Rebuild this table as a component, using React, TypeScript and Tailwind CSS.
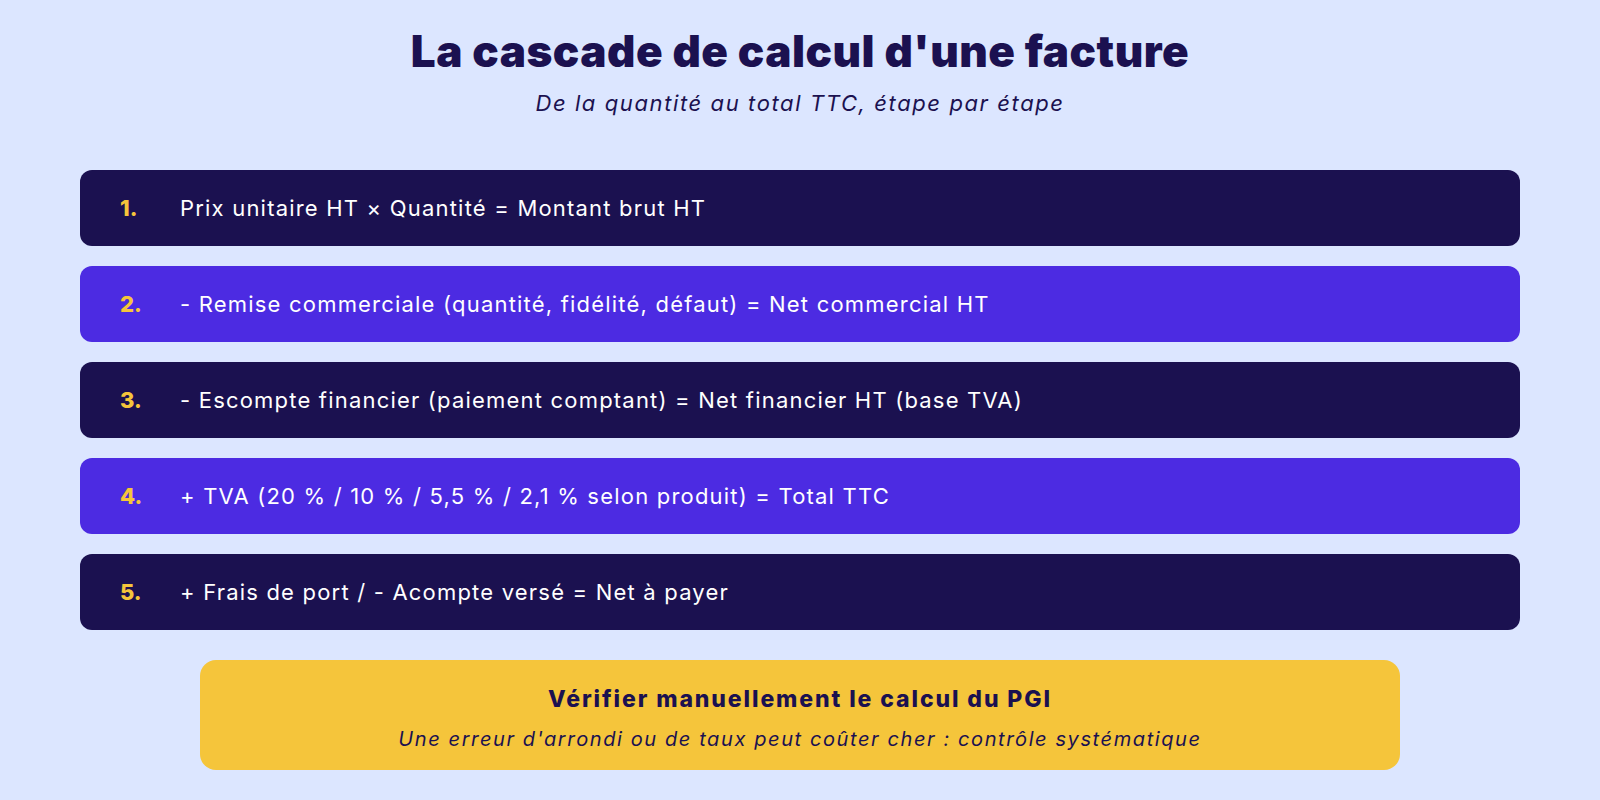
const steps = [
  { n: '1.', text: 'Prix unitaire HT × Quantité = Montant brut HT', dark: true },
  { n: '2.', text: '- Remise commerciale (quantité, fidélité, défaut) = Net commercial HT', dark: false },
  { n: '3.', text: '- Escompte financier (paiement comptant) = Net financier HT (base TVA)', dark: true },
  { n: '4.', text: '+ TVA (20 % / 10 % / 5,5 % / 2,1 % selon produit) = Total TTC', dark: false },
  { n: '5.', text: '+ Frais de port / - Acompte versé = Net à payer', dark: true },
];

export default function App() {
  return (
    <main className="flex min-h-screen w-full flex-col items-center bg-[#dce6ff] font-['Inter',sans-serif] text-[#1b1150]">
      <h1 className="mt-[25px] text-[44px] font-black leading-[52px] tracking-[0.5px]">
        La cascade de calcul d'une facture
      </h1>
      <p className="mt-[13px] text-[22px] italic leading-[26px] tracking-[1.6px]">
        De la quantité au total TTC, étape par étape
      </p>

      <div className="mt-[54px] flex w-[1440px] flex-col gap-[20px]">
        {steps.map((s) => (
          <div
            key={s.n}
            className={
              'flex h-[76px] items-center rounded-[12px] ' +
              (s.dark ? 'bg-[#1b1150]' : 'bg-[#4c2be2]')
            }
          >
            <span className="w-[100px] pl-[40px] text-[22px] font-extrabold text-[#f5c53b]">
              {s.n}
            </span>
            <span className="text-[22px] tracking-[1.2px] text-white">{s.text}</span>
          </div>
        ))}
      </div>

      <div className="mt-[30px] flex h-[110px] w-[1200px] flex-col items-center justify-center rounded-[16px] bg-[#f5c53b] pt-[6px]">
        <p className="text-[23px] font-extrabold leading-[28px] tracking-[1.9px]">
          Vérifier manuellement le calcul du PGI
        </p>
        <p className="mt-[14px] text-[20px] italic leading-[24px] tracking-[1.6px]">
          Une erreur d'arrondi ou de taux peut coûter cher : contrôle systématique
        </p>
      </div>
    </main>
  );
}
